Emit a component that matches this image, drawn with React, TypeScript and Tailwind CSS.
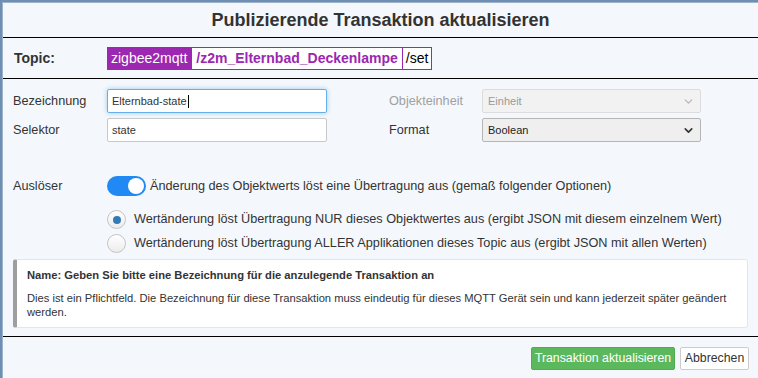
import { ChevronDown } from 'lucide-react'

function Radio({ checked }: { checked?: boolean }) {
  return (
    <span className="flex h-[19px] w-[19px] shrink-0 items-center justify-center rounded-full border border-[#c4c4c4] bg-gradient-to-b from-white to-[#ececec]">
      {checked && <span className="h-[8px] w-[8px] rounded-full bg-[#337ab7]" />}
    </span>
  )
}

export default function App() {
  return (
    <div className="h-[378px] w-[758px] overflow-hidden bg-[#6d8fb3] pl-[2px] pt-[2px] font-['Liberation_Sans',Arial,sans-serif] text-[#333]">
      <div className="flex h-full flex-col border-l border-t border-[#9fb3c8] bg-[#f4f8fc]">
        {/* Header */}
        <div className="flex h-[35px] items-center justify-center border-b border-black">
          <h1 className="text-[18px] font-bold text-[#333]">Publizierende Transaktion aktualisieren</h1>
        </div>

        {/* Topic */}
        <div className="flex h-[41px] items-center border-b border-black pl-[11px]">
          <span className="w-[93px] text-[14px] font-bold">Topic:</span>
          <div className="flex h-[23px] items-stretch text-[14px] leading-none">
            <span className="flex items-center bg-[#9c27b0] px-[4px] text-white">zigbee2mqtt</span>
            <span className="flex items-center border border-[#9c27b0] bg-white px-[4px] font-bold text-[#9c27b0]">
              /z2m_Elternbad_Deckenlampe
            </span>
            <span className="flex items-center border border-l-0 border-[#9c27b0] bg-white px-[3px] text-black">/set</span>
          </div>
        </div>

        {/* Body */}
        <div className="flex flex-1 flex-col border-b border-black px-[10px] pt-[10px]">
          <div className="grid grid-cols-[94px_220px_62px_93px_219px] items-center gap-y-[5px] text-[12.7px]">
            <span className="pt-[1px]">Bezeichnung</span>
            <div className="flex h-[24px] items-center rounded-[2px] border border-[#66afe9] bg-white px-[4px] text-[11px] shadow-[0_0_5px_rgba(102,175,233,0.6)]">
              Elternbad-state<span className="ml-px h-[13px] w-px bg-black" />
            </div>
            <span />
            <span className="pt-[1px] text-[#a0a0a0]">Objekteinheit</span>
            <div className="flex h-[24px] items-center justify-between rounded-[2px] border border-[#dcdcdc] bg-[#f2f2f2] px-[5px] text-[11px] text-[#9a9a9a]">
              Einheit
              <ChevronDown className="h-[13px] w-[13px] text-[#b8b8b8]" strokeWidth={2.5} />
            </div>

            <span className="pt-[1px]">Selektor</span>
            <div className="flex h-[24px] items-center rounded-[2px] border border-[#c8c8c8] bg-white px-[4px] text-[11px]">
              state
            </div>
            <span />
            <span className="pt-[1px]">Format</span>
            <div className="flex h-[24px] items-center justify-between rounded-[2px] border border-[#b5b5b5] bg-[#efefef] px-[5px] text-[11px] text-[#222]">
              Boolean
              <ChevronDown className="h-[13px] w-[13px] text-[#333]" strokeWidth={3} />
            </div>
          </div>

          <div className="mt-[34px] flex items-center text-[12.7px]">
            <span className="w-[94px] self-start pt-[1px]">Auslöser</span>
            <span className="flex h-[20px] w-[39px] items-center justify-end rounded-full bg-[#2189f3] pr-[2px]">
              <span className="h-[16px] w-[16px] rounded-full bg-white" />
            </span>
            <span className="ml-[4px]">Änderung des Objektwerts löst eine Übertragung aus (gemaß folgender Optionen)</span>
          </div>

          <div className="mt-[14px] flex flex-col gap-[5px] pl-[94px] text-[12.7px]">
            <label className="flex items-center gap-[8px]">
              <Radio checked />
              Wertänderung löst Übertragung NUR dieses Objektwertes aus (ergibt JSON mit diesem einzelnem Wert)
            </label>
            <label className="flex items-center gap-[8px]">
              <Radio />
              Wertänderung löst Übertragung ALLER Applikationen dieses Topic aus (ergibt JSON mit allen Werten)
            </label>
          </div>

          <div className="mt-[6px] flex h-[69px] rounded-[3px] border border-l-[4px] border-[#e6e6e6] border-l-[#9e9e9e] bg-white py-[8px] pl-[10px] pr-[10px] text-[11.2px] leading-[15px]">
            <div>
              <p className="font-bold">Name: Geben Sie bitte eine Bezeichnung für die anzulegende Transaktion an</p>
              <p className="mt-[8px] leading-[14px]">
                Dies ist ein Pflichtfeld. Die Bezeichnung für diese Transaktion muss eindeutig für dieses MQTT Gerät sein und kann jederzeit später geändert werden.
              </p>
            </div>
          </div>
        </div>

        {/* Footer */}
        <div className="flex h-[41px] items-center justify-end gap-[5px] pr-[9px] pt-[1px]">
          <button className="h-[23px] w-[144px] rounded-[2px] border border-[#4cae4c] bg-[#5cb85c] text-[12.3px] text-white">
            Transaktion aktualisieren
          </button>
          <button className="h-[23px] w-[69px] rounded-[2px] border border-[#ccc] bg-white text-[12.3px] text-[#333]">
            Abbrechen
          </button>
        </div>
      </div>
    </div>
  )
}
